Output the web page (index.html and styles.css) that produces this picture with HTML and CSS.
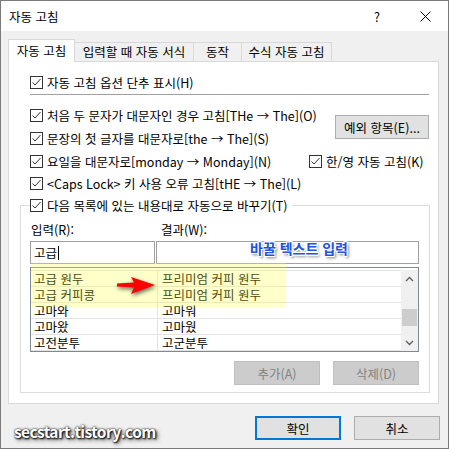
FILE: index.html
```html
<!DOCTYPE html>
<html lang="ko">
<head>
  <meta charset="UTF-8" />
  <title>자동 고침</title>
  <link rel="stylesheet" href="styles.css">
</head>
<body>
  <div class="window">
    <div class="titlebar">
      <span class="title">자동 고침</span>
      <span class="help">?</span>
      <svg class="close" width="11" height="11" viewBox="0 0 11 11"><path d="M0.5 0.5 L10.5 10.5 M10.5 0.5 L0.5 10.5" stroke="#000" stroke-width="1" fill="none"/></svg>
    </div>

    <div class="main">
      <div class="tabs">
        <div class="tab active">자동 고침</div>
        <div class="tab t2">입력할 때 자동 서식</div>
        <div class="tab t3">동작</div>
        <div class="tab t4">수식 자동 고침</div>
      </div>

      <div class="panel">
        <label class="check row1">
          <svg class="box" width="13" height="13" viewBox="0 0 13 13"><rect x="0.5" y="0.5" width="12" height="12" fill="#fff" stroke="#333"/><path d="M2.5 6.5 L5 9 L10.5 3" stroke="#333" fill="none"/></svg>
          <span>자동 고침 옵션 단추 표시(H)</span>
        </label>
        <div class="sep"></div>

        <div class="options">
          <label class="check">
            <svg class="box" width="13" height="13" viewBox="0 0 13 13"><rect x="0.5" y="0.5" width="12" height="12" fill="#fff" stroke="#333"/><path d="M2.5 6.5 L5 9 L10.5 3" stroke="#333" fill="none"/></svg>
            <span>처음 두 문자가 대문자인 경우 고침[THe → The](O)</span>
          </label>
          <button class="btn except">예외 항목(E)...</button>
          <label class="check">
            <svg class="box" width="13" height="13" viewBox="0 0 13 13"><rect x="0.5" y="0.5" width="12" height="12" fill="#fff" stroke="#333"/><path d="M2.5 6.5 L5 9 L10.5 3" stroke="#333" fill="none"/></svg>
            <span>문장의 첫 글자를 대문자로[the → The](S)</span>
          </label>
          <label class="check">
            <svg class="box" width="13" height="13" viewBox="0 0 13 13"><rect x="0.5" y="0.5" width="12" height="12" fill="#fff" stroke="#333"/><path d="M2.5 6.5 L5 9 L10.5 3" stroke="#333" fill="none"/></svg>
            <span>요일을 대문자로[monday → Monday](N)</span>
          </label>
          <label class="check hanyoung">
            <svg class="box" width="13" height="13" viewBox="0 0 13 13"><rect x="0.5" y="0.5" width="12" height="12" fill="#fff" stroke="#333"/><path d="M2.5 6.5 L5 9 L10.5 3" stroke="#333" fill="none"/></svg>
            <span>한/영 자동 고침(K)</span>
          </label>
          <label class="check">
            <svg class="box" width="13" height="13" viewBox="0 0 13 13"><rect x="0.5" y="0.5" width="12" height="12" fill="#fff" stroke="#333"/><path d="M2.5 6.5 L5 9 L10.5 3" stroke="#333" fill="none"/></svg>
            <span>&lt;Caps Lock&gt; 키 사용 오류 고침[tHE → The](L)</span>
          </label>
        </div>

        <fieldset class="group">
          <legend class="check">
            <svg class="box" width="13" height="13" viewBox="0 0 13 13"><rect x="0.5" y="0.5" width="12" height="12" fill="#fff" stroke="#333"/><path d="M2.5 6.5 L5 9 L10.5 3" stroke="#333" fill="none"/></svg>
            <span>다음 목록에 있는 내용대로 자동으로 바꾸기(T)</span>
          </legend>

          <div class="field-labels">
            <span class="lbl-in">입력(R):</span>
            <span class="lbl-out">결과(W):</span>
          </div>
          <div class="fields">
            <div class="textbox in">고급<span class="caret"></span></div>
            <div class="textbox out"></div>
          </div>

          <div class="list">
            <div class="rows">
              <div class="row"><span class="c1">고급 원두</span><span class="c2">프리미엄 커피 원두</span></div>
              <div class="row"><span class="c1">고급 커피콩</span><span class="c2">프리미엄 커피 원두</span></div>
              <div class="row"><span class="c1">고마와</span><span class="c2">고마워</span></div>
              <div class="row"><span class="c1">고마왔</span><span class="c2">고마웠</span></div>
              <div class="row"><span class="c1">고전분투</span><span class="c2">고군분투</span></div>
            </div>
            <div class="scrollbar">
              <div class="sb-arrow">
                <svg width="9" height="6" viewBox="0 0 9 6"><path d="M1 5 L4.5 1.5 L8 5" stroke="#606060" stroke-width="1.4" fill="none"/></svg>
              </div>
              <div class="sb-track"><div class="sb-thumb"></div></div>
              <div class="sb-arrow">
                <svg width="9" height="6" viewBox="0 0 9 6"><path d="M1 1 L4.5 4.5 L8 1" stroke="#606060" stroke-width="1.4" fill="none"/></svg>
              </div>
            </div>
          </div>

          <div class="list-buttons">
            <button class="btn disabled">추가(A)</button>
            <button class="btn disabled">삭제(D)</button>
          </div>
        </fieldset>
      </div>

      <div class="footer">
        <button class="btn default">확인</button>
        <button class="btn">취소</button>
      </div>
    </div>

    <!-- annotations drawn on top of the capture -->
    <div class="highlight"></div>
    <svg class="arrow" width="48" height="26" viewBox="0 0 48 26">
      <polygon points="5,10.5 22,9.5 19,4 43,12 19,21 22,14.5 5,13.5" fill="#f00"/>
    </svg>
    <div class="note">바꿀 텍스트 입력</div>
    <div class="watermark">secstart.tistory.com</div>
  </div>
</body>
</html>
```

FILE: styles.css
```css
body {
  margin: 0;
  font-family: "Noto Sans CJK KR", sans-serif;
  font-size: 12.5px;
  color: #000;
}
.window {
  position: relative;
  width: 449px;
  height: 449px;
  box-sizing: border-box;
  border: 1px solid #7a7a7a;
  background: #f0f0f0;
  overflow: hidden;
}
.titlebar {
  height: 30px;
  background: #fff;
  display: flex;
  align-items: center;
  padding-left: 8px;
}
.titlebar .title {
  flex: 1;
}
.help {
  width: 10px;
  text-align: center;
  margin-right: 38px;
}
.close {
  margin-right: 17px;
}
.main {
  padding: 8px 9px 0 7px;
}
.tabs {
  display: flex;
  align-items: flex-end;
  height: 22px;
}
.tab {
  box-sizing: border-box;
  height: 19px;
  border: 1px solid #d9d9d9;
  border-bottom: none;
  border-right: none;
  text-align: center;
  line-height: 17px;
}
.tab.active {
  position: relative;
  z-index: 1;
  width: 67px;
  height: 23px;
  margin-bottom: -1px;
  background: #fff;
  border-right: 1px solid #d9d9d9;
  line-height: 21px;
}
.tab.t2 {
  width: 118px;
  border-left: none;
}
.tab.t3 {
  width: 48px;
}
.tab.t4 {
  width: 91px;
  border-right: 1px solid #d9d9d9;
}
.panel {
  box-sizing: border-box;
  height: 343px;
  background: #fff;
  border: 1px solid #d9d9d9;
  padding: 9px 9px 0 21px;
}
.check {
  display: flex;
  align-items: center;
  gap: 4px;
  white-space: nowrap;
}
.check .box {
  flex: none;
}
.row1 {
  height: 23px;
}
.sep {
  height: 1px;
  background: #a0a0a0;
}
.options {
  margin-top: 9px;
  display: grid;
  grid-template-columns: minmax(0, 1fr) 120px;
  grid-template-rows: 23px 23px 22px 22px;
}
.btn {
  box-sizing: border-box;
  width: 86px;
  height: 24px;
  padding: 0;
  background: #e1e1e1;
  border: 1px solid #adadad;
  font-family: inherit;
  font-size: inherit;
  color: #000;
}
.btn.except {
  grid-column: 2;
  grid-row: 1 / 3;
  width: 94px;
  justify-self: end;
  align-self: center;
}
.hanyoung {
  grid-column: 2;
  grid-row: 3;
}
.group {
  box-sizing: border-box;
  width: 410px;
  margin: 0 0 0 -10px;
  padding: 0 10px 7px 9px;
  border: 1px solid #dcdcdc;
}
.group legend {
  height: 22px;
  padding: 0 5px 0 0;
}
.field-labels {
  display: flex;
  height: 16px;
  margin-top: 6px;
  line-height: 16px;
}
.lbl-in {
  width: 130px;
  padding-left: 1px;
}
.fields {
  display: flex;
  gap: 1px;
  margin-top: 3px;
}
.textbox {
  box-sizing: border-box;
  height: 23px;
  border: 1px solid #a0a0a0;
  padding-left: 3px;
  line-height: 21px;
}
.textbox.in {
  width: 125px;
}
.textbox.out {
  width: 263px;
}
.caret {
  display: inline-block;
  width: 1px;
  height: 14px;
  margin-left: 1px;
  background: #000;
  vertical-align: -2px;
}
.list {
  display: flex;
  margin-top: 3px;
  height: 85px;
  box-sizing: border-box;
  border: 1px solid #828790;
  padding-top: 2px;
}
.rows {
  width: 370px;
  border-bottom: 1px solid #e3e3e3;
}
.row {
  display: flex;
  height: 15px;
  border-top: 1px solid #e3e3e3;
  line-height: 15px;
}
.c1 {
  width: 126px;
  padding-left: 3px;
  box-sizing: border-box;
}
.c2 {
  border-left: 1px solid #e3e3e3;
  padding-left: 4px;
}
.scrollbar {
  width: 17px;
  display: flex;
  flex-direction: column;
  background: #f0f0f0;
}
.sb-arrow {
  height: 17px;
  display: flex;
  align-items: center;
  justify-content: center;
}
.sb-track {
  flex: 1;
}
.sb-thumb {
  margin: 22px 1px 0 1px;
  height: 17px;
  background: #cdcdcd;
}
.list-buttons {
  display: flex;
  justify-content: flex-end;
  gap: 13px;
  margin-top: 9px;
}
.btn.disabled {
  background: #cccccc;
  border-color: #bfbfbf;
  color: #838383;
}
.footer {
  display: flex;
  justify-content: flex-end;
  gap: 13px;
  margin: 12px -1px 0 0;
}
.btn.default {
  border: 2px solid #0078d7;
}
.highlight {
  position: absolute;
  left: 30px;
  top: 262px;
  width: 255px;
  height: 44px;
  background: rgba(255, 255, 60, 0.28);
}
.arrow {
  position: absolute;
  left: 111px;
  top: 272px;
  filter: drop-shadow(1px 2px 2px rgba(0, 0, 0, 0.6));
}
.note {
  position: absolute;
  left: 249px;
  top: 237px;
  font-size: 14px;
  font-weight: bold;
  color: #2252e0;
  text-shadow: -1px -1px 0 #fff, 1px -1px 0 #fff, -1px 1px 0 #fff, 1px 1px 0 #fff,
    0 -1px 0 #fff, 0 1px 0 #fff, 2px 2px 3px rgba(0, 0, 0, 0.6);
}
.watermark {
  position: absolute;
  left: 13px;
  top: 419px;
  font-size: 15.5px;
  font-weight: bold;
  letter-spacing: -0.6px;
  color: #fff;
  text-shadow: 0 0 2px #000, 1px 1px 2px #000, 2px 2px 4px rgba(0, 0, 0, 0.7);
}
```
